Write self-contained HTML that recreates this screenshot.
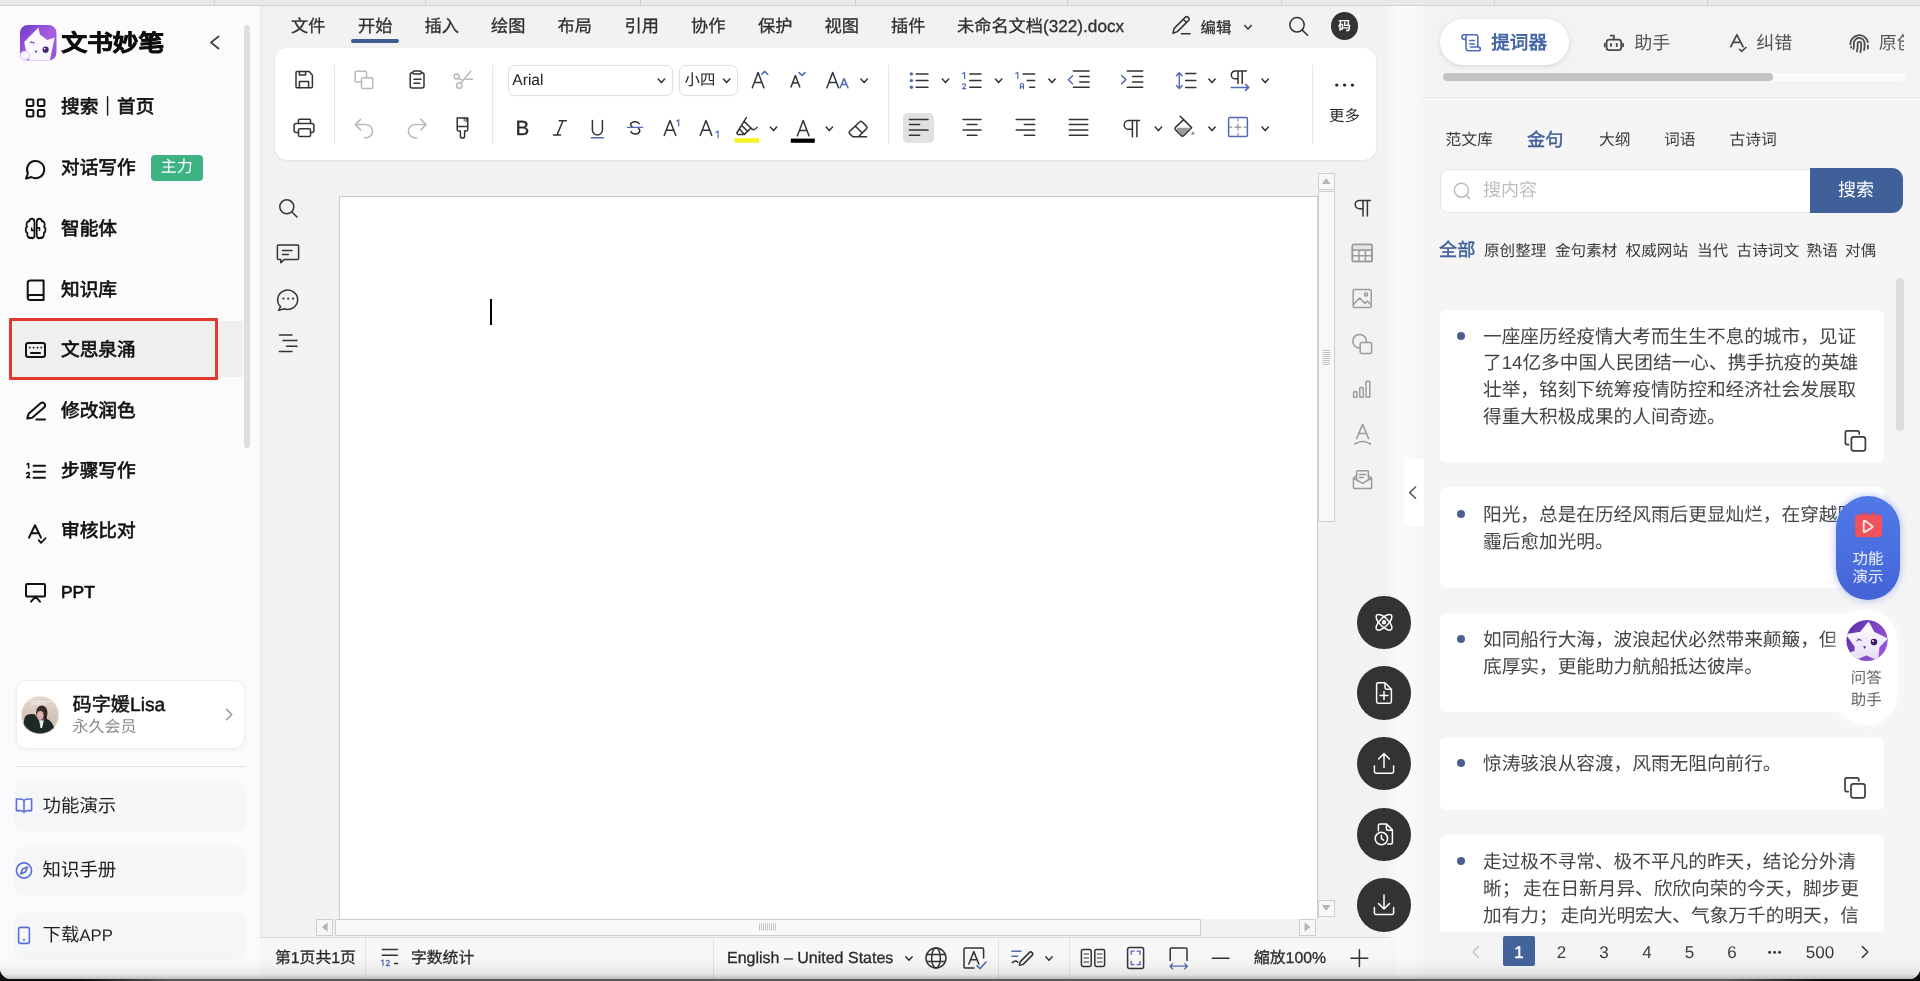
<!DOCTYPE html>
<html lang="zh-CN">
<head>
<meta charset="utf-8">
<title>文书妙笔</title>
<style>
*{box-sizing:border-box;margin:0;padding:0}
html,body{width:1920px;height:981px;overflow:hidden;background:#0d0d0d}
body{background:linear-gradient(90deg,#0d0d0d 0%,#0d0d0d 4%,#585858 9%,#585858 90%,#0d0d0d 95%,#0d0d0d 100%)}
body{font-family:"Liberation Sans",sans-serif;position:relative;-webkit-font-smoothing:antialiased;text-rendering:geometricPrecision}
#app{position:absolute;left:0;top:0;width:1920px;height:979px;overflow:hidden;background:#f2f2f2;border-radius:0 0 11px 11px;will-change:transform}
.b{position:absolute}
.t{position:absolute;white-space:nowrap;overflow:visible}
.j{display:inline-block;white-space:nowrap;text-align-last:justify;vertical-align:top}
.m{-webkit-text-stroke:.45px currentColor}
.mm{-webkit-text-stroke:.65px currentColor}
.s3{-webkit-text-stroke:.3px currentColor}
svg{position:absolute;left:0;top:0;overflow:visible}
.ic{fill:none;stroke:#333;stroke-width:1.5;stroke-linecap:round;stroke-linejoin:round}
.dis{stroke:#b9b9b9}
.bl{stroke:#5269b4}
.gy{stroke:#9b9b9b}
.wh{stroke:#fff}
</style>
</head>
<body>
<div id="app">
<!-- ============ TOP STRIP ============ -->
<div class="b" style="left:0px;top:0px;width:1920px;height:5px;background:#e9e9e9"></div>
<div class="b" style="left:0px;top:5px;width:1920px;height:1px;background:#d3d3d3"></div>
<div class="b" style="left:214px;top:0px;width:1px;height:5px;background:#d0d0d0"></div>
<div class="b" style="left:425px;top:0px;width:1px;height:5px;background:#d0d0d0"></div>
<div class="b" style="left:640px;top:0px;width:1px;height:5px;background:#d0d0d0"></div>
<div class="b" style="left:855px;top:0px;width:1px;height:5px;background:#d0d0d0"></div>
<div class="b" style="left:1067px;top:0px;width:1px;height:5px;background:#d0d0d0"></div>
<div class="b" style="left:1281px;top:0px;width:1px;height:5px;background:#d0d0d0"></div>
<div class="b" style="left:1494px;top:0px;width:1px;height:5px;background:#d0d0d0"></div>
<div class="b" style="left:1707px;top:0px;width:1px;height:5px;background:#d0d0d0"></div>
<!-- ============ EDITOR ============ -->
<div class="b" style="left:1384px;top:6px;width:40px;height:973px;background:linear-gradient(90deg,#f2f2f2 0%,#f8f9fa 35%,#f9fafb 60%,#f5f5f5 100%)"></div>
<div class="b" style="left:260px;top:6px;width:1px;height:973px;background:#e6e6e6"></div>
<div class="t s3" style="width:34.4px;text-align-last:justify;left:291px;top:13.3px;font-size:17.2px;line-height:26px;color:#2f2f2f;font-weight:400;">文件</div>
<div class="t s3" style="width:34.4px;text-align-last:justify;left:358px;top:13.3px;font-size:17.2px;line-height:26px;color:#2f2f2f;font-weight:400;">开始</div>
<div class="t s3" style="width:34.4px;text-align-last:justify;left:424.5px;top:13.3px;font-size:17.2px;line-height:26px;color:#2f2f2f;font-weight:400;">插入</div>
<div class="t s3" style="width:34.4px;text-align-last:justify;left:491px;top:13.3px;font-size:17.2px;line-height:26px;color:#2f2f2f;font-weight:400;">绘图</div>
<div class="t s3" style="width:34.4px;text-align-last:justify;left:557.5px;top:13.3px;font-size:17.2px;line-height:26px;color:#2f2f2f;font-weight:400;">布局</div>
<div class="t s3" style="width:34.4px;text-align-last:justify;left:624.5px;top:13.3px;font-size:17.2px;line-height:26px;color:#2f2f2f;font-weight:400;">引用</div>
<div class="t s3" style="width:34.4px;text-align-last:justify;left:691px;top:13.3px;font-size:17.2px;line-height:26px;color:#2f2f2f;font-weight:400;">协作</div>
<div class="t s3" style="width:34.4px;text-align-last:justify;left:758px;top:13.3px;font-size:17.2px;line-height:26px;color:#2f2f2f;font-weight:400;">保护</div>
<div class="t s3" style="width:34.4px;text-align-last:justify;left:824.5px;top:13.3px;font-size:17.2px;line-height:26px;color:#2f2f2f;font-weight:400;">视图</div>
<div class="t s3" style="width:34.4px;text-align-last:justify;left:891px;top:13.3px;font-size:17.2px;line-height:26px;color:#2f2f2f;font-weight:400;">插件</div>
<div class="b" style="left:351px;top:39px;width:48px;height:3.5px;background:#3d5d92;border-radius:2px"></div>
<div class="t s3" style="width:167.16px;text-align-last:justify;left:957px;top:13.3px;font-size:17.2px;line-height:26px;color:#2f2f2f;font-weight:400;">未命名文档(322).docx</div>
<div class="t s3" style="width:30.8px;text-align-last:justify;left:1200.5px;top:16.5px;font-size:15.4px;line-height:23px;color:#2f2f2f;font-weight:400;">编辑</div>
<div class="b" style="left:1330.7px;top:12.3px;width:27.4px;height:27.4px;background:#333;border-radius:50%"></div>
<div class="t" style="left:1329.4px;width:30px;text-align:center;top:16.5px;font-size:12.5px;line-height:19px;color:#fff;font-weight:700;">码</div>
<div class="b" style="left:275px;top:47.5px;width:1101px;height:112.5px;background:#fff;border-radius:13px;box-shadow:0 1px 3px rgba(0,0,0,.07)"></div>
<div class="b" style="left:333.5px;top:64.5px;width:1px;height:79px;background:#e7e7e7"></div>
<div class="b" style="left:492px;top:64.5px;width:1px;height:79px;background:#e7e7e7"></div>
<div class="b" style="left:887.8px;top:64.5px;width:1px;height:79px;background:#e7e7e7"></div>
<div class="b" style="left:1312px;top:64.5px;width:1px;height:79px;background:#e7e7e7"></div>
<div class="b" style="left:507.5px;top:64.5px;width:165px;height:31px;background:#fff;border:1px solid #e0e0e0;border-radius:7px;box-shadow:0 0 2px rgba(0,0,0,.05)"></div>
<div class="b" style="left:679px;top:64.5px;width:59px;height:31px;background:#fff;border:1px solid #e0e0e0;border-radius:7px;box-shadow:0 0 2px rgba(0,0,0,.05)"></div>
<div class="t" style="left:512.3px;top:68.7px;font-size:15.6px;line-height:23px;color:#222;font-weight:400;">Arial</div>
<div class="t" style="width:30.8px;text-align-last:justify;left:684.5px;top:68.7px;font-size:15.4px;line-height:23px;color:#222;font-weight:400;">小四</div>
<div class="t" style="left:507.4px;width:30px;text-align:center;top:113.2px;font-size:20.6px;line-height:31px;color:#2b2b2b;font-weight:400;-webkit-text-stroke:.35px #2b2b2b;">B</div>
<div class="b" style="left:903px;top:112.6px;width:31px;height:30.8px;background:#e1e1e1;border-radius:5px"></div>
<div class="t" style="left:1314.5px;width:60px;text-align:center;top:104.5px;font-size:15.4px;line-height:23px;color:#2b2b2b;font-weight:400;"><span class="j" style="width:30.8px">更多</span></div>
<div class="b" style="left:339px;top:196px;width:978.5px;height:722.5px;background:#fff;border:1px solid #c9c9c9;border-bottom:none"></div>
<div class="b" style="left:490px;top:299px;width:2px;height:25.5px;background:#000"></div>
<div class="b" style="left:1318px;top:172.5px;width:16.5px;height:17px;background:#f8f8f8;border:1px solid #cfcfcf"></div>
<div class="b" style="left:1318px;top:191px;width:16.5px;height:331px;background:#f8f8f8;border:1px solid #cfcfcf"></div>
<div class="b" style="left:1318px;top:899.5px;width:16.5px;height:17px;background:#f8f8f8;border:1px solid #cfcfcf"></div>
<div class="b" style="left:316px;top:918.5px;width:17px;height:17px;background:#f6f6f6;border:1px solid #cfcfcf"></div>
<div class="b" style="left:335px;top:918.5px;width:865.5px;height:17px;background:#f8f8f8;border:1px solid #cfcfcf"></div>
<div class="b" style="left:1299px;top:918.5px;width:17px;height:17px;background:#f6f6f6;border:1px solid #cfcfcf"></div>
<div class="b" style="left:1357.2px;top:595.5px;width:53.6px;height:53.6px;background:#333;border-radius:50%"></div>
<div class="b" style="left:1357.2px;top:666.2px;width:53.6px;height:53.6px;background:#333;border-radius:50%"></div>
<div class="b" style="left:1357.2px;top:736.8px;width:53.6px;height:53.6px;background:#333;border-radius:50%"></div>
<div class="b" style="left:1357.2px;top:807.5px;width:53.6px;height:53.6px;background:#333;border-radius:50%"></div>
<div class="b" style="left:1357.2px;top:878.2px;width:53.6px;height:53.6px;background:#333;border-radius:50%"></div>
<div class="b" style="left:260px;top:937px;width:1131px;height:42px;background:#f7f7f7;border-top:1px solid #dadada"></div>
<div class="b" style="left:364.5px;top:938px;width:1px;height:41px;background:#e3e3e3"></div>
<div class="b" style="left:713px;top:938px;width:1px;height:41px;background:#e3e3e3"></div>
<div class="b" style="left:997.5px;top:938px;width:1px;height:41px;background:#e3e3e3"></div>
<div class="b" style="left:1068.5px;top:938px;width:1px;height:41px;background:#e3e3e3"></div>
<div class="t s3" style="width:80.77px;text-align-last:justify;left:275px;top:947.4px;font-size:15.8px;line-height:24px;color:#2b2b2b;font-weight:400;">第1页共1页</div>
<div class="t s3" style="width:63.21px;text-align-last:justify;left:411px;top:947.4px;font-size:15.8px;line-height:24px;color:#2b2b2b;font-weight:400;">字数统计</div>
<div class="t s3" style="left:727px;top:947.2px;font-size:16px;line-height:24px;color:#2b2b2b;font-weight:400;">English – United States</div>
<div class="t s3" style="width:72px;text-align-last:justify;left:1254px;top:947.4px;font-size:15.8px;line-height:24px;color:#2b2b2b;font-weight:400;">縮放100%</div>
<div class="b" style="left:0px;top:955px;width:1920px;height:24px;background:linear-gradient(180deg,rgba(0,0,0,0) 0%,rgba(0,0,0,.025) 45%,rgba(0,0,0,.07) 80%,rgba(0,0,0,.24) 100%);z-index:50"></div>
<svg width="1420" height="981" viewBox="0 0 1420 981">
<g class="ic" stroke-width="1.6"><path d="M1173 33.2 l1.2 -4.8 l11 -11 a2.2 2.2 0 0 1 3.2 3.2 l-11 11 z M1183.3 19.3 l3.2 3.2"/><path d="M1181.5 33.8 h8.5"/></g>
<path class="ic" d="M1244.8 25.5 L1248 29 L1251.2 25.5"/>
<g class="ic" stroke-width="1.7"><circle cx="1297" cy="24.8" r="7.2"/><path d="M1302.3 30.1 l5.2 5.2"/></g>
<g class="ic" stroke-width="1.7"><path d="M296 72.6 a1 1 0 0 1 1 -1 h12.2 l3.2 3.6 v11.6 a1 1 0 0 1 -1 1 h-14.4 a1 1 0 0 1 -1 -1 z"/><path d="M299.4 71.8 v3.2 h6.2 v-3.2 M299.4 87.6 v-6.2 h9.2 v6.2"/></g>
<g class="ic" stroke-width="1.7"><path d="M298.5 123.4 v-3.2 a.9 .9 0 0 1 .9 -.9 h10.2 a.9 .9 0 0 1 .9 .9 v3.2"/><rect x="294.1" y="123.4" width="19.8" height="9" rx="2"/><rect x="298.5" y="128.8" width="12" height="7.8" rx="1.4" fill="#fff"/></g>
<g class="ic dis" stroke-width="1.5"><path d="M361.5 82 h-5.3 a1 1 0 0 1 -1 -1 v-8.7 a1 1 0 0 1 1 -1 h9.3 a1 1 0 0 1 1 1 v5.4"/><rect x="361.5" y="77.8" width="11.2" height="10.8" rx="1"/></g>
<g class="ic" stroke-width="1.7"><rect x="410.2" y="72.7" width="13.8" height="15.2" rx="2"/><rect x="412.8" y="71" width="8.6" height="3" rx="1.5" fill="#fff"/><path d="M414 79.3 h7 M414 83.2 h5.6"/></g>
<g class="ic dis" stroke-width="1.4"><circle cx="456.6" cy="76.6" r="2.5"/><circle cx="459.3" cy="85.6" r="2.8"/><path d="M470.6 71.2 L460.6 83.2 M458.4 78.4 L463.4 80.6 M465.8 79.2 H472.6"/></g>
<g class="ic dis" stroke-width="1.5"><path d="M360.6 119.4 L355.3 124.6 L360.6 129.9 M355.6 124.6 H366 a6.6 6.6 0 0 1 0 13.2 H364.4"/></g>
<g class="ic dis" stroke-width="1.5"><path d="M420.8 119.4 L426.1 124.6 L420.8 129.9 M425.8 124.6 H415 a6.6 6.6 0 0 0 0 13.2 H416.6"/></g>
<g class="ic" stroke-width="1.7"><path d="M457.2 118 h10.6 v11.4 a1.6 1.6 0 0 1 -1.6 1.6 h-1.6 v5 a2 2 0 0 1 -4.2 0 v-5 h-1.6 a1.6 1.6 0 0 1 -1.6 -1.6 z M457.2 126.6 h10.6"/><path d="M464.2 118 v2.6 M466.2 118 v3.6" stroke-width="1.1"/></g>
<path class="ic" d="M658.2 79.1 L661.4 82.6 L664.6 79.1"/>
<path class="ic" d="M723.4 79.1 L726.6 82.6 L729.8 79.1"/>
<g class="ic" stroke-width="1.45"><path d="M752.3 87.8 L758.1 72.4 L763.9 87.8 M754.4 82.4 H761.8"/><path class="bl" d="M761.6 74.4 L764.7 71.2 L767.8 74.4"/></g>
<g class="ic" stroke-width="1.45"><path d="M791 86.9 L795.4 75.5 L799.8 86.9 M792.6 82.9 H798.2"/><path class="bl" d="M799 72.6 L802 75.5 L805 72.6"/></g>
<g class="ic" stroke-width="1.45"><path d="M826.9 87.8 L832.7 72.4 L838.5 87.8 M829 82.4 H836.4"/><path class="bl" d="M840.2 87.8 L844.1 78.6 L848 87.8 M841.7 84.5 H846.5"/></g>
<path class="ic" d="M860.9 79.1 L864.1 82.6 L867.3 79.1"/>
<g class="ic"><path d="M916.2 73.9 H928 M916.2 80.6 H928 M916.2 87.3 H928"/><g fill="#5269b4" stroke="none"><circle cx="911.4" cy="73.9" r="1.7"/><circle cx="911.4" cy="80.6" r="1.7"/><circle cx="911.4" cy="87.3" r="1.7"/></g></g>
<path class="ic" d="M942.3 79.1 L945.5 82.6 L948.7 79.1"/>
<g class="ic"><path d="M969.8 73.9 H981 M969.8 80.6 H981 M969.8 87.3 H981"/><path class="bl" stroke-width="1.2" d="M962.6 73.6 L964.6 72.4 V78.6 M962.6 84.6 q1.6 -1.6 2.8 -.2 q.6 1.2 -2.8 4.2 h3.2"/></g>
<path class="ic" d="M995.4 79.1 L998.6 82.6 L1001.8 79.1"/>
<g class="ic"><path d="M1023.2 73.9 H1034.7 M1027.2 80.6 H1034.7 M1029.6 87.3 H1034.7"/><path class="bl" stroke-width="1.2" d="M1015.8 73.6 L1017.8 72.4 V78.6 M1020.4 88.6 v-3.6 a1.5 1.5 0 0 1 3 0 v3.6 M1020.4 86.8 h3"/></g>
<path class="ic" d="M1048.8 79.1 L1052 82.6 L1055.2 79.1"/>
<g class="ic"><path d="M1073.4 70.9 H1089.1 M1079.8 76.5 H1089.1 M1079.8 81.9 H1089.1 M1073.4 87.3 H1089.1"/><path class="bl" d="M1072.6 75.7 L1068.4 79.7 L1072.6 83.7"/></g>
<g class="ic"><path d="M1127.3 70.9 H1142.7 M1132.6 76.5 H1142.7 M1132.6 81.9 H1142.7 M1127.3 87.3 H1142.7"/><path class="bl" d="M1121.6 75.5 L1125.9 79.6 L1121.6 83.7"/></g>
<g class="ic"><path d="M1185.7 73.6 H1195.8 M1185.7 80.6 H1195.8 M1185.7 87.5 H1195.8"/><path class="bl" stroke-width="1.4" d="M1179.3 73 V88 M1176.4 75.7 L1179.3 72.7 L1182.2 75.7 M1176.4 85.4 L1179.3 88.4 L1182.2 85.4"/></g>
<path class="ic" d="M1208.8 79.1 L1212 82.6 L1215.2 79.1"/>
<g class="ic" stroke-width="1.4"><path d="M1246.4 71 H1235.2 a3.9 3.9 0 0 0 0 7.8 H1238 M1238 71 V83.4 M1242.2 71 V83.4"/><path class="bl" d="M1231.2 87.4 H1248.6 M1245.6 84.4 L1248.8 87.4 L1245.6 90.4"/></g>
<path class="ic" d="M1262 79.1 L1265.2 82.6 L1268.4 79.1"/>
<g fill="#2b2b2b"><circle cx="1336.8" cy="85.1" r="1.7"/><circle cx="1344.6" cy="85.1" r="1.7"/><circle cx="1352.4" cy="85.1" r="1.7"/></g>
<g class="ic" stroke-width="1.5"><path d="M559.2 120.7 H566.4 M553.4 135.1 H560.6 M563 120.7 L556.9 135.1"/></g>
<g class="ic" stroke-width="1.5"><path d="M592.4 120.5 V130 a5 5 0 0 0 10 0 V120.5"/><path class="bl" stroke-width="1.5" d="M591.3 137.7 H603.5"/></g>
<g class="ic" stroke-width="1.5"><path d="M639.2 123.6 a4.6 3.4 0 0 0 -8.6 .6 q0 1.4 1.4 2.4 M631 131.6 a4.6 3.6 0 0 0 8.8 -.6 q0 -1.4 -1.2 -2.4"/><path class="bl" stroke-width="1.3" d="M627.2 127.3 H642.6"/></g>
<g class="ic" stroke-width="1.45"><path d="M664.2 135.4 L670 120.5 L675.8 135.4 M666.3 130.2 H673.7"/><path class="bl" stroke-width="1.2" d="M676.6 121.2 L678.7 119.8 V126"/></g>
<g class="ic" stroke-width="1.45"><path d="M700.2 135.4 L706 120.5 L711.8 135.4 M702.3 130.2 H709.7"/><path class="bl" stroke-width="1.2" d="M716 132.4 L718.1 131 V137.6"/></g>
<g class="ic" stroke-width="1.4"><path d="M746.4 117.6 L744 121.4 L751 128 L744.4 134.4 H738 L736.8 133 L744 121.4 M741.6 125.4 L747.6 131.2 M739.4 129 L744.4 134.4 M751 128 Q753.6 131.6 757 127.4"/></g>
<rect x="734.5" y="138.2" width="24.6" height="4.5" fill="#f3f322"/>
<path class="ic" d="M770.3 127.1 L773.5 130.6 L776.7 127.1"/>
<g class="ic" stroke-width="1.45"><path d="M797.4 135.7 L803.2 120.5 L809 135.7 M799.5 130.4 H806.9"/></g>
<rect x="790.8" y="138.6" width="24" height="4.2" fill="#000"/>
<path class="ic" d="M826.1 127.1 L829.3 130.6 L832.5 127.1"/>
<g class="ic" stroke-width="1.5"><path d="M859.8 121.8 a1.6 1.6 0 0 1 2.2 0 l4.6 4.6 a1.6 1.6 0 0 1 0 2.2 l-8.2 8.2 h-5.6 l-3.2 -3.2 a1.6 1.6 0 0 1 0 -2.2 z M855.4 126.2 l6.8 6.8 M858.4 136.8 H866.6"/></g>
<g class="ic"><path d="M909.4 119.4 H928 M909.4 124.6 H919.6 M909.4 130 H928 M909.4 135.2 H919.6"/></g>
<g class="ic"><path d="M963 119.4 H981 M967.2 124.6 H976.9 M963 130 H981 M967.2 135.2 H976.9"/></g>
<g class="ic"><path d="M1016.2 119.4 H1034.7 M1024.3 124.6 H1034.7 M1016.2 130 H1034.7 M1024.3 135.2 H1034.7"/></g>
<g class="ic"><path d="M1069.3 119.4 H1087.8 M1069.3 124.6 H1087.8 M1069.3 130 H1087.8 M1069.3 135.2 H1087.8"/></g>
<g class="ic" stroke-width="1.45"><path d="M1139.6 120.5 H1128.6 a4.4 4.4 0 0 0 0 8.8 H1132.4 M1132.4 120.5 V136.8 M1136.9 120.5 V136.8"/></g>
<path class="ic" d="M1155.2 127.1 L1158.4 130.6 L1161.6 127.1"/>
<g class="ic" stroke-width="1.5"><path d="M1183.6 119.6 L1191.6 127.6 L1183.6 135.6 a1.6 1.6 0 0 1 -2.2 0 L1175.4 129.6 a1.6 1.6 0 0 1 0 -2.2 Z M1183.6 119.6 L1180.2 116.2"/><path d="M1177.4 127.8 H1191 L1183.6 134.6 a1.4 1.4 0 0 1 -1.8 0 L1176.6 129.4 z" fill="#9a9a9a" stroke="none"/><path d="M1192.9 131.2 l1.8 2.4 a1.9 1.9 0 0 1 -3.6 0 z" fill="#9a9a9a" stroke="none"/></g>
<path class="ic" d="M1208.8 127.1 L1212 130.6 L1215.2 127.1"/>
<g class="ic" stroke-width="1.4"><rect class="bl" x="1228.6" y="117.6" width="18.8" height="19" rx="1.4" stroke="#5874b8"/><path stroke="#8d8d8d" stroke-width="1.2" d="M1238 118.6 v2.4 M1238 133.2 v2.4 M1229.6 127.1 h2.4 M1244 127.1 h2.4 M1238 124 v6.2 M1234.9 127.1 h6.2"/></g>
<path class="ic" d="M1262 127.1 L1265.2 130.6 L1268.4 127.1"/>
<g class="ic" stroke-width="1.5"><circle cx="286.8" cy="206.8" r="7"/><path d="M292 212 l5 5"/></g>
<g class="ic" stroke-width="1.5"><path d="M278.4 245 h19.2 a1 1 0 0 1 1 1 v12.6 a1 1 0 0 1 -1 1 h-13.4 l-3.4 3.2 v-3.2 h-2.4 a1 1 0 0 1 -1 -1 v-12.6 a1 1 0 0 1 1 -1 z M282.4 250.4 h9.6 M282.4 254.4 h6"/></g>
<g class="ic" stroke-width="1.5"><path d="M280.6 306.6 a10 9.6 0 1 1 3.6 2.2 l-5.6 1.6 z"/><g fill="#333" stroke="none"><circle cx="283.4" cy="298.6" r="1.1"/><circle cx="288.2" cy="298.6" r="1.1"/><circle cx="293" cy="298.6" r="1.1"/></g></g>
<g class="ic" stroke-width="1.5"><path d="M279.4 335 H292 M283 340.6 H297 M286.6 346.2 H297 M279.4 351.6 H292"/></g>
<g fill="#b5b5b5"><path d="M1321.8 184 L1326.2 178.2 L1330.6 184 Z"/><path d="M1321.8 905 L1326.2 910.8 L1330.6 905 Z"/><path d="M327.6 922.6 L321.8 927 L327.6 931.4 Z"/><path d="M1304.6 922.6 L1310.4 927 L1304.6 931.4 Z"/></g>
<g stroke="#c4c4c4" stroke-width="1"><path d="M1322.5 350.5 H1330"/><path d="M1322.5 352.5 H1330"/><path d="M1322.5 354.5 H1330"/><path d="M1322.5 356.5 H1330"/><path d="M1322.5 358.5 H1330"/><path d="M1322.5 360.5 H1330"/><path d="M1322.5 362.5 H1330"/><path d="M1322.5 364.5 H1330"/><path d="M759.5 923.5 V930.5"/><path d="M761.5 923.5 V930.5"/><path d="M763.5 923.5 V930.5"/><path d="M765.5 923.5 V930.5"/><path d="M767.5 923.5 V930.5"/><path d="M769.5 923.5 V930.5"/><path d="M771.5 923.5 V930.5"/><path d="M773.5 923.5 V930.5"/><path d="M775.5 923.5 V930.5"/></g>
<g class="ic" stroke-width="1.45"><path d="M1370.2 200.4 H1359.4 a4.2 4.2 0 0 0 0 8.4 H1363 M1363 200.4 V216 M1367.4 200.4 V216"/></g>
<g class="ic gy" stroke-width="1.4"><rect x="1352.4" y="244.6" width="19.6" height="17" rx="1.2"/><path d="M1352.4 250 H1372 M1352.4 255.8 H1372 M1359 244.6 V261.6 M1365.4 244.6 V261.6"/><rect x="1352.4" y="244.6" width="19.6" height="5.4" fill="#e4e4e4" stroke="none"/><rect x="1352.4" y="244.6" width="19.6" height="17" rx="1.2"/><path d="M1352.4 250 H1372"/></g>
<g class="ic gy" stroke-width="1.4"><rect x="1353.2" y="289.6" width="18" height="18" rx="1.6"/><circle cx="1366" cy="294.6" r="1.5"/><path d="M1353.4 304.4 L1359.6 298 L1365 303.4 L1367.4 301.2 L1371 304.6"/></g>
<g class="ic gy" stroke-width="1.4"><circle cx="1359.6" cy="341.2" r="6.8"/><rect x="1360.2" y="342.4" width="11.4" height="11.2" rx="1.4" fill="#f2f2f2"/></g>
<g class="ic gy" stroke-width="1.4"><rect x="1353.6" y="391.8" width="3.4" height="5.4" rx=".8"/><rect x="1359.8" y="387.4" width="3.4" height="9.8" rx=".8"/><rect x="1366" y="381.2" width="3.8" height="16" rx=".8"/></g>
<g class="ic gy" stroke-width="1.4"><path d="M1356.6 438.6 L1362.6 424.4 L1368.6 438.6 M1358.8 433.4 H1366.4 M1354.8 444 Q1362.6 439 1370.6 444"/></g>
<g class="ic gy" stroke-width="1.4"><path d="M1353.4 478 L1356.6 475.6 M1371.6 478 L1368.4 475.6 M1353.4 478 V487.6 a1 1 0 0 0 1 1 H1370.6 a1 1 0 0 0 1 -1 V478 L1362.5 483.4 Z"/><path d="M1356.6 479.8 V471.8 a1 1 0 0 1 1 -1 H1367.4 a1 1 0 0 1 1 1 V479.8 M1359.4 474.6 H1365.6 M1359.4 477.4 H1363.4"/></g>
<g class="ic wh" stroke-width="1.7" transform="translate(1384 622.3)"><ellipse rx="10.2" ry="4.3" transform="rotate(45)"/><ellipse rx="10.2" ry="4.3" transform="rotate(-45)"/><circle r="1.5" fill="#fff"/></g>
<g class="ic wh" stroke-width="1.7" transform="translate(1384 693)"><path d="M-7.4 -8.6 a1.6 1.6 0 0 1 1.6 -1.6 h6.8 l6.4 6.4 v12.4 a1.6 1.6 0 0 1 -1.6 1.6 h-11.6 a1.6 1.6 0 0 1 -1.6 -1.6 z M1 -10.2 v5 a1.4 1.4 0 0 0 1.4 1.4 h5"/><path d="M0 -1.6 v8 M-4 2.4 h8"/></g>
<g class="ic wh" stroke-width="1.7" transform="translate(1384 763.6)"><path d="M0 4 V-9.6 M-5.4 -4.6 L0 -10 L5.4 -4.6 M-9.6 2.4 V8 a1.6 1.6 0 0 0 1.6 1.6 h16 a1.6 1.6 0 0 0 1.6 -1.6 V2.4"/></g>
<g class="ic wh" stroke-width="1.7" transform="translate(1384 834.3)"><path d="M-5.6 -3.6 V-8.6 a1.6 1.6 0 0 1 1.6 -1.6 h6.6 l5.8 5.8 v12.6 a1.6 1.6 0 0 1 -1.6 1.6 h-3.2 M2.4 -10 v4.6 a1.4 1.4 0 0 0 1.4 1.4 h4.6"/><circle cx="-2.6" cy="4.2" r="6.2"/><path d="M-2.6 1 v3.4 l2.2 1.4"/></g>
<g class="ic wh" stroke-width="1.7" transform="translate(1384 905)"><path d="M0 -10 V3.6 M-5.4 -1.4 L0 4 L5.4 -1.4 M-9.6 2.4 V8 a1.6 1.6 0 0 0 1.6 1.6 h16 a1.6 1.6 0 0 0 1.6 -1.6 V2.4"/></g>
<g class="ic" stroke-width="1.3"><path d="M382.4 949.6 H397.4 M382.4 955.2 H397.4"/><path stroke="#2b2b2b" d="M394.6 963.4 H397.6"/><path class="bl" stroke-width="1.2" d="M381.6 960.8 L383 960 V965.6 M386.4 961 q1.4 -1.4 2.6 -.2 q.8 1.4 -2.7 4.8 h3.4"/></g>
<path class="ic" d="M905.8 956.7 L909 960.2 L912.2 956.7"/>
<g class="ic" stroke-width="1.4"><circle cx="936" cy="958" r="10"/><ellipse cx="936" cy="958" rx="4.4" ry="10"/><path d="M926.6 954.4 H945.4 M926.6 961.6 H945.4"/></g>
<g class="ic" stroke-width="1.4"><path d="M983.6 958 V949.2 a1.2 1.2 0 0 0 -1.2 -1.2 H965.2 a1.2 1.2 0 0 0 -1.2 1.2 V966.8 a1.2 1.2 0 0 0 1.2 1.2 H974"/><path d="M968.8 964 L973.8 951.6 L978.8 964 M970.6 959.8 H977"/><path class="bl" d="M977 965.6 L980 968.6 L986 962"/></g>
<g class="ic" stroke-width="1.4"><path class="bl" d="M1012 951.2 H1021 M1012 956.2 H1017.6"/><path d="M1019.4 965.4 l.9 -3.8 l9 -9 a1.9 1.9 0 0 1 2.8 2.8 l-9 9 z"/><path d="M1012.4 962.6 q3.4 -3 5.4 -.4"/></g>
<path class="ic" d="M1045.8 956.7 L1049 960.2 L1052.2 956.7"/>
<g class="ic" stroke-width="1.4"><rect x="1081.4" y="949.4" width="9.8" height="17" rx="1.6"/><rect x="1094.8" y="949.4" width="9.8" height="17" rx="1.6"/><path d="M1084 954 H1088.6 M1084 958 H1088.6 M1084 962 H1088.6 M1097.4 954 H1102 M1097.4 958 H1102 M1097.4 962 H1102" stroke-width="1.1"/></g>
<g class="ic" stroke-width="1.4"><rect x="1127.6" y="947.4" width="16" height="21" rx="2"/><path class="bl" stroke-width="1.3" d="M1131.2 954.4 V951.2 H1134 M1137.2 951.2 H1140 V954.4 M1131.2 961.4 V964.6 H1134 M1137.2 964.6 H1140 V961.4"/></g>
<g class="ic" stroke-width="1.4"><path d="M1170.2 960.6 V949.2 a1.2 1.2 0 0 1 1.2 -1.2 H1185.8 a1.2 1.2 0 0 1 1.2 1.2 V960.6"/><path class="bl" stroke-width="1.3" d="M1170 966.2 H1187.4 M1172.6 963.6 L1170 966.2 L1172.6 968.8 M1184.8 963.6 L1187.4 966.2 L1184.8 968.8"/></g>
<g class="ic" stroke-width="1.4"><path d="M1212.4 958.2 H1229 M1351 958.2 H1367.8 M1359.4 949.8 V966.6"/></g>
</svg>
<!-- ============ LEFT SIDEBAR ============ -->
<div class="b" style="left:0px;top:6px;width:260px;height:973px;background:#fbfbfd"></div>
<div class="b" style="left:244px;top:25px;width:6px;height:423px;background:#dfdfdf;border-radius:3px"></div>
<svg width="37" height="36" style="left:20px;top:25px" viewBox="0 0 37 36">
<defs><linearGradient id="lg1" x1="0" y1="0" x2="1" y2="1"><stop offset="0" stop-color="#6f3bc8"/><stop offset=".55" stop-color="#a85de0"/><stop offset="1" stop-color="#8f57d6"/></linearGradient>
<clipPath id="lgc"><rect x="0" y="0" width="36.5" height="35.5" rx="8"/></clipPath></defs>
<rect x="0" y="0" width="36.5" height="35.5" rx="8" fill="url(#lg1)"/>
<g clip-path="url(#lgc)">
<path d="M18.4 2.5 L20 9.6 L27.2 15 L34.6 12.6 L31 30 L29.8 36 L9.5 36 L5.3 23 L4.2 17 Z" fill="#fbf8ff"/>
<circle cx="25.6" cy="24.7" r="3.1" fill="#4a2377"/><circle cx="24.6" cy="23.6" r=".9" fill="#fff"/>
<path d="M9.5 17.8 q2.6 -1.6 5 .8 M11.2 16.2 l1 1.4 M13.4 16.6 l.4 1.4" stroke="#5a3292" stroke-width=".8" fill="none"/>
<path d="M15 25.2 l2.6 1.2 l-2 1.8 z" fill="#5a3292"/>
</g>
<circle cx="4.8" cy="30.6" r="4.6" fill="#f6f0ff" stroke="#cdb6ee" stroke-width=".7"/>
</svg>
<div class="t" style="width:102.4px;text-align-last:justify;left:61.6px;top:25.4px;font-size:25.6px;line-height:38px;color:#0d0d0d;font-weight:700;-webkit-text-stroke:.75px #0d0d0d;transform:scaleY(.9);transform-origin:50% 52%;">文书妙笔</div>
<div class="b" style="left:10px;top:321px;width:233px;height:56px;background:#efefef"></div>
<div class="t mm" style="width:93.29px;text-align-last:justify;left:61px;top:93px;font-size:18.67px;line-height:28px;color:#0f0f0f;font-weight:400;">搜索｜首页</div>
<div class="t mm" style="width:74.63px;text-align-last:justify;left:61px;top:154px;font-size:18.67px;line-height:28px;color:#0f0f0f;font-weight:400;">对话写作</div>
<div class="t mm" style="width:55.97px;text-align-last:justify;left:61px;top:215px;font-size:18.67px;line-height:28px;color:#0f0f0f;font-weight:400;">智能体</div>
<div class="t mm" style="width:55.97px;text-align-last:justify;left:61px;top:275.5px;font-size:18.67px;line-height:28px;color:#0f0f0f;font-weight:400;">知识库</div>
<div class="t mm" style="width:74.63px;text-align-last:justify;left:61px;top:336px;font-size:18.67px;line-height:28px;color:#0f0f0f;font-weight:400;">文思泉涌</div>
<div class="t mm" style="width:74.63px;text-align-last:justify;left:61px;top:396.5px;font-size:18.67px;line-height:28px;color:#0f0f0f;font-weight:400;">修改润色</div>
<div class="t mm" style="width:74.63px;text-align-last:justify;left:61px;top:457px;font-size:18.67px;line-height:28px;color:#0f0f0f;font-weight:400;">步骤写作</div>
<div class="t mm" style="width:74.63px;text-align-last:justify;left:61px;top:517px;font-size:18.67px;line-height:28px;color:#0f0f0f;font-weight:400;">审核比对</div>
<div class="t mm" style="left:61px;top:578px;font-size:18.67px;line-height:28px;color:#0f0f0f;font-weight:400;"><span style="font-size:17.4px">PPT</span></div>
<div class="b" style="left:151px;top:155px;width:51.5px;height:25.5px;background:#3db282;border-radius:4px"></div>
<div class="t" style="left:146.8px;width:60px;text-align:center;top:155.8px;font-size:16px;line-height:24px;color:#fff;font-weight:400;"><span class="j" style="width:32.02px">主力</span></div>
<div class="b" style="left:9px;top:318px;width:208.5px;height:61.5px;border:3px solid #e2392d;border-radius:1px"></div>
<div class="b" style="left:16px;top:679.5px;width:228.5px;height:69.5px;background:#fff;border-radius:11px;border:1px solid #efeff1;box-shadow:0 1px 4px rgba(0,0,0,.05)"></div>
<svg width="38" height="38" style="left:21px;top:695.5px" viewBox="21 695.5 38 38"><defs><clipPath id="avc"><circle cx="40" cy="714.5" r="19"/></clipPath><linearGradient id="avg" x1="0" y1="0" x2="0" y2="1"><stop offset="0" stop-color="#e3d8cf"/><stop offset=".5" stop-color="#d6c5bb"/><stop offset="1" stop-color="#cbb9ae"/></linearGradient></defs>
<g clip-path="url(#avc)"><rect x="21" y="695.5" width="38" height="38" fill="url(#avg)"/>
<path d="M29 701 h22 M31 703.4 h16" stroke="#f1ebe4" stroke-width="1.2"/>
<path d="M21.5 734 L24.6 717 Q27 712.8 34.4 713.8 L37.4 717 L40.4 723 L45 717.4 L49 719.6 Q54.6 723.6 55.6 734 Z" fill="#1e2927"/>
<ellipse cx="41.8" cy="712.2" rx="5.7" ry="7.3" fill="#3b2b27"/>
<ellipse cx="40.3" cy="714.8" rx="3.3" ry="4.4" fill="#dcb1b0"/>
<path d="M39.4 720.6 L43.8 720 L42.2 727.4 L40.4 727.4 Z" fill="#e6e9e6"/>
<path d="M42.6 707 Q47.6 709 46.8 719 L44.4 719 Q45.2 712 42.6 707 Z" fill="#33241f"/></g>
<circle cx="40" cy="714.5" r="18.7" fill="none" stroke="rgba(255,255,255,.55)" stroke-width=".8"/></svg>
<div class="t m" style="width:92.77px;text-align-last:justify;left:72.5px;top:691.1px;font-size:19.2px;line-height:29px;color:#111;font-weight:400;">码字媛Lisa</div>
<div class="t" style="width:64.02px;text-align-last:justify;left:72.5px;top:716px;font-size:16px;line-height:24px;color:#8c8c8c;font-weight:400;">永久会员</div>
<div class="b" style="left:14.5px;top:765.5px;width:231px;height:1px;background:#e3e3e5"></div>
<div class="b" style="left:15px;top:781px;width:229.5px;height:50.5px;background:#f5f6f8;border-radius:10px;box-shadow:0 0 3px #f5f6f8"></div>
<div class="b" style="left:15px;top:846.5px;width:229.5px;height:49px;background:#f5f6f8;border-radius:10px;box-shadow:0 0 3px #f5f6f8"></div>
<div class="b" style="left:15px;top:911.5px;width:229.5px;height:48.5px;background:#f5f6f8;border-radius:10px;box-shadow:0 0 3px #f5f6f8"></div>
<div class="t" style="width:73.58px;text-align-last:justify;left:42.6px;top:791.7px;font-size:18.4px;line-height:28px;color:#1f1f1f;font-weight:400;">功能演示</div>
<div class="t" style="width:73.58px;text-align-last:justify;left:42.6px;top:856.3px;font-size:18.4px;line-height:28px;color:#1f1f1f;font-weight:400;">知识手册</div>
<div class="t" style="width:70.21px;text-align-last:justify;left:42.6px;top:921px;font-size:18.4px;line-height:28px;color:#1f1f1f;font-weight:400;">下载<span style="font-size:16.7px">APP</span></div>
<svg width="260" height="981" viewBox="0 0 260 981">
<path d="M218.5 36.5 L211 42.5 L218.5 48.5" fill="none" stroke="#444" stroke-width="1.8" stroke-linecap="round" stroke-linejoin="round"/>
<g fill="none" stroke="#111" stroke-width="2" stroke-linecap="round" stroke-linejoin="round"><rect x="26.8" y="99.5" width="6.6" height="6.6" rx="1"/><rect x="37.8" y="99.5" width="6.6" height="6.6" rx="1"/><rect x="26.8" y="110" width="6.6" height="6.6" rx="1"/><rect x="37.8" y="110" width="6.6" height="6.6" rx="1"/></g>
<path fill="none" stroke="#111" stroke-width="2" stroke-linecap="round" stroke-linejoin="round" d="M26 178.6 l1.9 -5.2 a8.6 8.6 0 1 1 3.4 3.6 z"/>
<g fill="none" stroke="#111" stroke-width="2" stroke-linecap="round" stroke-linejoin="round" stroke-width="1.9" transform="translate(35.6 228.9) scale(.88 1.05) translate(-35.6 -228.6)"><path d="M34.3 222 a3 3 0 0 0 -5.9 -.8 a3.3 3.3 0 0 0 -2.5 5.3 a3.5 3.5 0 0 0 .5 6.1 a3.2 3.2 0 0 0 3.9 4.4 a2.7 2.7 0 0 0 4 -1.6 Z"/><path d="M36.9 222 a3 3 0 0 1 5.9 -.8 a3.3 3.3 0 0 1 2.5 5.3 a3.5 3.5 0 0 1 -.5 6.1 a3.2 3.2 0 0 1 -3.9 4.4 a2.7 2.7 0 0 1 -4 -1.6 Z"/><path d="M34.3 230 h-3.2 v-2.2 M36.9 227.6 h3.2 v2.2" stroke-width="1.7"/></g>
<g fill="none" stroke="#111" stroke-width="2" stroke-linecap="round" stroke-linejoin="round"><path d="M27.7 297.5 v-14.5 a2.5 2.5 0 0 1 2.5 -2.5 h13.4 v19.4 h-13.4 a2.5 2.5 0 0 1 0 -5 h13.4"/></g>
<g fill="none" stroke="#111" stroke-width="2" stroke-linecap="round" stroke-linejoin="round"><rect x="26" y="343" width="19" height="14" rx="2.2"/><path d="M31 353 h9" /><path d="M29.8 347.6 h.1 M33.6 347.6 h.1 M37.4 347.6 h.1 M41.2 347.6 h.1" stroke-width="1.8"/></g>
<g fill="none" stroke="#111" stroke-width="2" stroke-linecap="round" stroke-linejoin="round"><path transform="translate(36 410.9) rotate(-41)" d="M-11.6 0 L-7.4 -2.7 H8.4 a2.7 2.7 0 0 1 0 5.4 H-7.4 Z"/><path d="M36.4 419.4 h8.6"/></g>
<g fill="none" stroke="#111" stroke-width="2" stroke-linecap="round" stroke-linejoin="round"><path d="M33.6 465.8 h11.4 M33.6 471.8 h11.4 M33.6 477.7 h11.4"/><path d="M27 464.2 l1.6 -.9 v4.6 M26.6 473.4 q1.8 -1.6 2.8 -.2 q.6 1.4 -2.8 4.4 h3.2" stroke-width="1.5"/></g>
<g fill="none" stroke="#111" stroke-width="2" stroke-linecap="round" stroke-linejoin="round"><path d="M29 537.6 l6 -12.4 l6 12.4 M31.2 533.2 h7.6"/><path d="M38.6 540.2 l2.4 2.6 l4.6 -4.6" stroke-width="1.7"/></g>
<g fill="none" stroke="#111" stroke-width="2" stroke-linecap="round" stroke-linejoin="round"><rect x="26" y="584" width="19" height="12.6" rx="1.2"/><path d="M31 601.6 l4.5 -5 l4.5 5"/></g>
<path d="M226.5 709.2 L231.8 714.5 L226.5 719.8" fill="none" stroke="#9a9a9a" stroke-width="1.5" stroke-linecap="round" stroke-linejoin="round"/>
<g fill="none" stroke="#5b6fd6" stroke-width="1.6" stroke-linecap="round" stroke-linejoin="round"><path d="M24 800.4 v12.4 M24 800.4 q-1.6 -1.4 -4 -1.4 h-3.6 v11.6 h3.6 q2.4 0 4 1.4 M24 800.4 q1.6 -1.4 4 -1.4 h3.6 v11.6 h-3.6 q-2.4 0 -4 1.4"/></g>
<g fill="none" stroke="#5b6fd6" stroke-width="1.6" stroke-linecap="round" stroke-linejoin="round"><circle cx="24" cy="870.5" r="7.6"/><path d="M27.4 867.1 l-2 4.8 l-4.8 2 l2 -4.8 z"/></g>
<g fill="none" stroke="#5b6fd6" stroke-width="1.6" stroke-linecap="round" stroke-linejoin="round"><rect x="18.6" y="927.4" width="10.8" height="16" rx="2"/><path d="M23.6 939.8 h.8"/></g>
</svg>
<!-- ============ RIGHT PANEL ============ -->
<div class="b" style="left:1424px;top:6px;width:496px;height:973px;background:#f5f5f5"></div>
<div class="b" style="left:1424px;top:6px;width:496px;height:91px;background:#f3f3f3"></div>
<div class="b" style="left:1422px;top:97px;width:498px;height:1px;background:#e7e7e7"></div>
<div class="b" style="left:1404px;top:459px;width:20px;height:67.5px;background:#fff;border-radius:8px 0 0 8px"></div>
<div class="b" style="left:1440px;top:19.2px;width:129.4px;height:46.2px;background:#fff;border-radius:23.2px;box-shadow:0 1px 5px rgba(0,0,0,.13)"></div>
<div class="t" style="width:55.8px;text-align-last:justify;left:1491.2px;top:28.6px;font-size:18.6px;line-height:28px;color:#4465a6;font-weight:700;">提词器</div>
<div class="t" style="width:36px;text-align-last:justify;left:1634.2px;top:30px;font-size:18px;line-height:27px;color:#555;font-weight:400;">助手</div>
<div class="t" style="width:36px;text-align-last:justify;left:1756.2px;top:30px;font-size:18px;line-height:27px;color:#555;font-weight:400;">纠错</div>
<div class="b" style="left:1875px;top:25px;width:29px;height:36px;overflow:hidden"><div class="t" style="width:36px;text-align-last:justify;left:3.8px;top:5px;font-size:18px;line-height:27px;color:#555;font-weight:400;">原创</div>
</div>
<div class="b" style="left:1442.5px;top:73px;width:463px;height:8px;background:#fafafa;border-radius:4px"></div>
<div class="b" style="left:1442.5px;top:73.2px;width:330.5px;height:7.8px;background:#c3c3c3;border-radius:4px"></div>
<div class="t" style="width:47.41px;text-align-last:justify;left:1445.5px;top:129px;font-size:15.8px;line-height:24px;color:#3c3c3c;font-weight:400;">范文库</div>
<div class="t m" style="width:36.4px;text-align-last:justify;left:1527px;top:126.8px;font-size:18.2px;line-height:27px;color:#40609a;font-weight:400;">金句</div>
<div class="t" style="width:31.61px;text-align-last:justify;left:1599px;top:129px;font-size:15.8px;line-height:24px;color:#3c3c3c;font-weight:400;">大纲</div>
<div class="t" style="width:31.61px;text-align-last:justify;left:1664px;top:129px;font-size:15.8px;line-height:24px;color:#3c3c3c;font-weight:400;">词语</div>
<div class="t" style="width:47.41px;text-align-last:justify;left:1729.5px;top:129px;font-size:15.8px;line-height:24px;color:#3c3c3c;font-weight:400;">古诗词</div>
<div class="b" style="left:1440px;top:168.5px;width:371px;height:44.1px;background:#fff;border:1px solid #e6e6e6;border-radius:8px 0 0 8px"></div>
<div class="b" style="left:1809.5px;top:168.2px;width:93px;height:44.8px;background:#40609a;border-radius:0 11px 11px 0"></div>
<div class="t" style="width:54px;text-align-last:justify;left:1483px;top:177.1px;font-size:18px;line-height:27px;color:#bdbdbd;font-weight:400;">搜内容</div>
<div class="t" style="left:1816px;width:80px;text-align:center;top:176.9px;font-size:18px;line-height:27px;color:#fff;font-weight:400;"><span class="j" style="width:36px">搜索</span></div>
<div class="t m" style="width:36.4px;text-align-last:justify;left:1439px;top:237.1px;font-size:18.2px;line-height:27px;color:#40609a;font-weight:400;">全部</div>
<div class="t" style="width:62.4px;text-align-last:justify;left:1484px;top:239.5px;font-size:15.6px;line-height:23px;color:#3c3c3c;font-weight:400;">原创整理</div>
<div class="t" style="width:62.4px;text-align-last:justify;left:1555px;top:239.5px;font-size:15.6px;line-height:23px;color:#3c3c3c;font-weight:400;">金句素材</div>
<div class="t" style="width:62.4px;text-align-last:justify;left:1625.6px;top:239.5px;font-size:15.6px;line-height:23px;color:#3c3c3c;font-weight:400;">权威网站</div>
<div class="t" style="width:31.21px;text-align-last:justify;left:1697px;top:239.5px;font-size:15.6px;line-height:23px;color:#3c3c3c;font-weight:400;">当代</div>
<div class="t" style="width:62.4px;text-align-last:justify;left:1736.6px;top:239.5px;font-size:15.6px;line-height:23px;color:#3c3c3c;font-weight:400;">古诗词文</div>
<div class="t" style="width:31.21px;text-align-last:justify;left:1806.6px;top:239.5px;font-size:15.6px;line-height:23px;color:#3c3c3c;font-weight:400;">熟语</div>
<div class="t" style="width:31.21px;text-align-last:justify;left:1845px;top:239.5px;font-size:15.6px;line-height:23px;color:#3c3c3c;font-weight:400;">对偶</div>
<div class="b" style="left:1896px;top:277.5px;width:8px;height:153px;background:#dcdcdc;border-radius:4px"></div>
<div class="b" style="left:1440px;top:309.5px;width:444px;height:153px;background:#fff;border-radius:6px"></div>
<div class="b" style="left:1457px;top:332px;width:8px;height:8px;background:#4a6090;border-radius:50%"></div>
<div class="t" style="width:373.13px;text-align-last:justify;left:1483px;top:322.5px;font-size:18.67px;line-height:27px;color:#444;font-weight:400;">一座座历经疫情大考而生生不息的城市，见证</div>
<div class="t" style="width:375.24px;text-align-last:justify;left:1483px;top:349.2px;font-size:18.67px;line-height:27px;color:#444;font-weight:400;">了14亿多中国人民团结一心、携手抗疫的英雄</div>
<div class="t" style="width:373.13px;text-align-last:justify;left:1483px;top:375.9px;font-size:18.67px;line-height:27px;color:#444;font-weight:400;">壮举，铭刻下统筹疫情防控和经济社会发展取</div>
<div class="t" style="width:242.54px;text-align-last:justify;left:1483px;top:402.5px;font-size:18.67px;line-height:27px;color:#444;font-weight:400;">得重大积极成果的人间奇迹。</div>
<div class="b" style="left:1440px;top:486.5px;width:444px;height:101px;background:#fff;border-radius:6px"></div>
<div class="b" style="left:1457px;top:510px;width:8px;height:8px;background:#4a6090;border-radius:50%"></div>
<div class="t" style="width:373.13px;text-align-last:justify;left:1483px;top:500.5px;font-size:18.67px;line-height:27px;color:#444;font-weight:400;">阳光，总是在历经风雨后更显灿烂，在穿越阴</div>
<div class="t" style="width:130.6px;text-align-last:justify;left:1483px;top:527.5px;font-size:18.67px;line-height:27px;color:#444;font-weight:400;">霾后愈加光明。</div>
<div class="b" style="left:1440px;top:612.5px;width:444px;height:99.5px;background:#fff;border-radius:6px"></div>
<div class="b" style="left:1457px;top:635px;width:8px;height:8px;background:#4a6090;border-radius:50%"></div>
<div class="t" style="width:373.13px;text-align-last:justify;left:1483px;top:625.5px;font-size:18.67px;line-height:27px;color:#444;font-weight:400;">如同船行大海，波浪起伏必然带来颠簸，但家</div>
<div class="t" style="width:279.85px;text-align-last:justify;left:1483px;top:652.5px;font-size:18.67px;line-height:27px;color:#444;font-weight:400;">底厚实，更能助力航船抵达彼岸。</div>
<div class="b" style="left:1440px;top:736.5px;width:444px;height:73.5px;background:#fff;border-radius:6px"></div>
<div class="b" style="left:1457px;top:759px;width:8px;height:8px;background:#4a6090;border-radius:50%"></div>
<div class="t" style="width:298.5px;text-align-last:justify;left:1483px;top:749.5px;font-size:18.67px;line-height:27px;color:#444;font-weight:400;">惊涛骇浪从容渡，风雨无阻向前行。</div>
<div class="b" style="left:1440px;top:835px;width:444px;height:99px;background:#fff;border-radius:6px"></div>
<div class="b" style="left:1457px;top:857px;width:8px;height:8px;background:#4a6090;border-radius:50%"></div>
<div class="t" style="width:373.13px;text-align-last:justify;left:1483px;top:847.5px;font-size:18.67px;line-height:27px;color:#444;font-weight:400;">走过极不寻常、极不平凡的昨天，结论分外清</div>
<div class="t" style="width:375.91px;text-align-last:justify;left:1483px;top:874.5px;font-size:18.67px;line-height:27px;color:#444;font-weight:400;">晰；<span style="font-size:10px"> </span>走在日新月异、欣欣向荣的今天，脚步更</div>
<div class="t" style="width:375.91px;text-align-last:justify;left:1483px;top:901.5px;font-size:18.67px;line-height:27px;color:#444;font-weight:400;">加有力；<span style="font-size:10px"> </span>走向光明宏大、气象万千的明天，信</div>
<div class="b" style="left:1424px;top:932px;width:496px;height:47px;background:#f4f4f4"></div>
<div class="b" style="left:1503px;top:935.5px;width:32px;height:30.5px;background:#43639b;border-radius:2px"></div>
<div class="t" style="left:1504px;width:30px;text-align:center;top:939.8px;font-size:17px;line-height:26px;color:#fff;font-weight:400;-webkit-text-stroke:.4px #fff;">1</div>
<div class="t" style="left:1536.5px;width:50px;text-align:center;top:939.8px;font-size:17px;line-height:26px;color:#3a3a3a;font-weight:400;">2</div>
<div class="t" style="left:1579px;width:50px;text-align:center;top:939.8px;font-size:17px;line-height:26px;color:#3a3a3a;font-weight:400;">3</div>
<div class="t" style="left:1622px;width:50px;text-align:center;top:939.8px;font-size:17px;line-height:26px;color:#3a3a3a;font-weight:400;">4</div>
<div class="t" style="left:1664.5px;width:50px;text-align:center;top:939.8px;font-size:17px;line-height:26px;color:#3a3a3a;font-weight:400;">5</div>
<div class="t" style="left:1707px;width:50px;text-align:center;top:939.8px;font-size:17px;line-height:26px;color:#3a3a3a;font-weight:400;">6</div>
<div class="t" style="left:1795px;width:50px;text-align:center;top:939.8px;font-size:17px;line-height:26px;color:#3a3a3a;font-weight:400;">500</div>
<div class="b" style="left:1836px;top:496.4px;width:64px;height:103.6px;background:linear-gradient(180deg,#5179e6 0%,#4a6fe0 55%,#4463d6 100%);border-radius:32px;box-shadow:0 0 9px rgba(82,116,232,.45)"></div>
<div class="t" style="left:1837.9px;width:60px;text-align:center;top:548.3px;font-size:15.4px;line-height:23px;color:#f1f4ff;font-weight:400;"><span class="j" style="width:30.8px">功能</span></div>
<div class="t" style="left:1837.9px;width:60px;text-align:center;top:566.4px;font-size:15.4px;line-height:23px;color:#f1f4ff;font-weight:400;"><span class="j" style="width:30.8px">演示</span></div>
<div class="b" style="left:1836px;top:610px;width:61.4px;height:115.4px;background:#fff;border-radius:30.7px;box-shadow:0 0 10px rgba(255,255,255,.9)"></div>
<div class="t" style="left:1836.2px;width:60px;text-align:center;top:667.3px;font-size:15.4px;line-height:23px;color:#666;font-weight:400;"><span class="j" style="width:30.8px">问答</span></div>
<div class="t" style="left:1836.2px;width:60px;text-align:center;top:688.5px;font-size:15.4px;line-height:23px;color:#666;font-weight:400;"><span class="j" style="width:30.8px">助手</span></div>
<svg width="1920" height="981" viewBox="0 0 1920 981">
<path d="M1415.6 487 L1409.6 492.6 L1415.6 498.2" fill="none" stroke="#555" stroke-width="1.5" stroke-linecap="round" stroke-linejoin="round"/>
<g fill="none" stroke="#4c6cbc" stroke-width="1.6" stroke-linecap="round" stroke-linejoin="round"><path d="M1466 39.4 H1464.2 a2.3 2.3 0 0 1 0 -4.6 H1476.2 a1.6 1.6 0 0 1 1.6 1.6 V47.2 M1466 36.2 V48.4 a2.4 2.4 0 0 0 2.4 2.4 H1478.4 a1.9 1.9 0 0 0 0 -3.8 H1470.4"/><path d="M1469.6 40.6 H1474.4 M1469.6 44 H1474.4" stroke-width="1.5"/></g>
<g fill="none" stroke="#4a4a4a" stroke-width="1.8" stroke-linecap="round" stroke-linejoin="round"><rect x="1606.6" y="39.6" width="14.6" height="10.6" rx="2.6"/><path d="M1613.9 39.4 V35.6 H1610.6 M1604.8 43.6 V46.4 M1623 43.6 V46.4"/><path d="M1611 44 V46 M1616.8 44 V46" stroke-width="1.9"/></g>
<g fill="none" stroke="#4a4a4a" stroke-width="1.8" stroke-linecap="round" stroke-linejoin="round" stroke-width="1.7"><path d="M1730.8 46.6 L1736.9 34.8 L1743 46.6 M1733 42.4 H1740.8"/><path d="M1739.4 49.2 L1741.6 51.4 L1746 47.4" stroke-width="1.5"/></g>
<g fill="none" stroke="#4a4a4a" stroke-width="1.8" stroke-linecap="round" stroke-linejoin="round" stroke-width="1.5"><path d="M1850.4 44.4 a8.8 8.8 0 0 1 17.4 -2.2 M1867.9 45.4 v3.2 M1853.4 49 q.8 -3.2 .4 -5.6 a5.4 5.4 0 0 1 10.8 0 q.2 3.6 -.5 6.6 M1857 51.4 q1 -4.2 .6 -7.8 a1.8 1.8 0 0 1 3.6 0 q.2 4.2 -.8 8.6 M1851 47.6 l.1 -.6"/></g>
<g fill="none" stroke="#bcbcbc" stroke-width="1.5" stroke-linecap="round"><circle cx="1461.4" cy="190.2" r="7"/><path d="M1466.6 195.6 L1469.4 198.4"/></g>
<g fill="none" stroke="#3d3d3d" stroke-width="1.7" stroke-linecap="round" stroke-linejoin="round" transform="translate(1844.6 430)"><path d="M4 14.6 H2.6 a1.8 1.8 0 0 1 -1.8 -1.8 V2.6 a1.8 1.8 0 0 1 1.8 -1.8 H12.8 a1.8 1.8 0 0 1 1.8 1.8 V4"/><rect x="6.8" y="6.8" width="14" height="14" rx="2.4"/></g>
<g fill="none" stroke="#3d3d3d" stroke-width="1.7" stroke-linecap="round" stroke-linejoin="round" transform="translate(1844.2 777)"><path d="M4 14.6 H2.6 a1.8 1.8 0 0 1 -1.8 -1.8 V2.6 a1.8 1.8 0 0 1 1.8 -1.8 H12.8 a1.8 1.8 0 0 1 1.8 1.8 V4"/><rect x="6.8" y="6.8" width="14" height="14" rx="2.4"/></g>
<path d="M1478.4 946.6 L1473 952 L1478.4 957.4" fill="none" stroke="#c4c4c4" stroke-width="1.5" stroke-linecap="round" stroke-linejoin="round"/>
<path d="M1862.4 946.6 L1867.8 952 L1862.4 957.4" fill="none" stroke="#3a3a3a" stroke-width="1.5" stroke-linecap="round" stroke-linejoin="round"/>
<g fill="#3a3a3a"><circle cx="1769.6" cy="952.2" r="1.5"/><circle cx="1774.6" cy="952.2" r="1.5"/><circle cx="1779.6" cy="952.2" r="1.5"/></g>
<g transform="translate(1868.6 525.4)"><path d="M-5.6 -13.4 L-2.6 -10.2 M5.6 -13.4 L2.6 -10.2" stroke="#e8414d" stroke-width="1.6" stroke-linecap="round"/><rect x="-13.6" y="-10.8" width="27.2" height="22.6" rx="4" fill="#f0525c"/><path transform="translate(-1.7 1) scale(.88)" d="M-3.6 -5.6 V5.4 a.9 .9 0 0 0 1.4 .8 L6 1.2 a.9 .9 0 0 0 0 -1.6 L-2.2 -6.4 a.9 .9 0 0 0 -1.4 .8 Z" fill="none" stroke="#ffeceb" stroke-width="2.1" stroke-linejoin="round"/></g>
<defs><linearGradient id="qa" x1="0" y1="0" x2="1" y2=".6"><stop offset="0" stop-color="#5a29a6"/><stop offset="1" stop-color="#9656d6"/></linearGradient><linearGradient id="qs" x1="0" y1="0" x2="0" y2="1"><stop offset="0" stop-color="#fdfcff"/><stop offset="1" stop-color="#e6ddf4"/></linearGradient><clipPath id="qac"><circle cx="1867" cy="640.5" r="20.6"/></clipPath></defs>
<circle cx="1867" cy="640.5" r="20.6" fill="url(#qa)"/>
<g clip-path="url(#qac)"><path d="M1868.4 623.4 L1873.4 632.8 L1885.8 638.8 L1878.4 646.6 L1877 659 L1866.6 654.2 L1855.8 658.6 L1855.8 646.4 L1847.8 635 L1860.8 633 Z" fill="url(#qs)" stroke="url(#qs)" stroke-width="2.4" stroke-linejoin="round"/>
<circle cx="1874" cy="642.1" r="3.3" fill="#3f1f6e"/><circle cx="1873" cy="641" r=".9" fill="#fff"/><path d="M1856.8 640.6 q2.2 -2.4 4.6 -.4 M1858 638.6 l.6 1.2" stroke="#4d2a86" stroke-width="1" fill="none" stroke-linecap="round"/><path d="M1863.2 646 l3 .6 l-1.8 2.4 z" fill="#4d2a86"/>
<circle cx="1853.6" cy="655.4" r="4.2" fill="#efe8fa"/></g>
</svg>
</div>
</body>
</html>
